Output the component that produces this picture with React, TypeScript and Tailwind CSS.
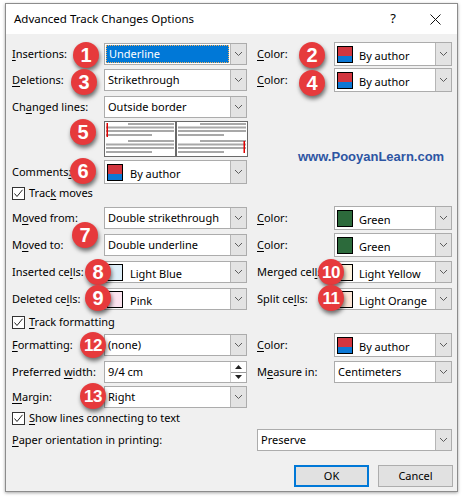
import React from "react";

const Chevron = () => (
  <svg width="9" height="6" viewBox="0 0 9 6">
    <path d="M1 1 L4.5 4.5 L8 1" fill="none" stroke="#5c5c5c" strokeWidth="1" />
  </svg>
);

function Arrow() {
  return (
    <div className="w-[16px] self-stretch shrink-0 flex items-center justify-center bg-[#e3e3e3] border-l border-[#b6b6b6]">
      <Chevron />
    </div>
  );
}

function Combo({ w = "w-[143px]", tall = false, children }: { w?: string; tall?: boolean; children?: React.ReactNode }) {
  return (
    <div className={`flex shrink-0 ${w} ${tall ? "h-[24px]" : "h-[22px]"} border border-[#acacac] bg-white`}>
      <div className="flex-1 flex items-center min-w-0">{children}</div>
      <Arrow />
    </div>
  );
}

function Txt({ children }: { children: React.ReactNode }) {
  return <span className="pl-[3px] whitespace-nowrap">{children}</span>;
}

function SwatchText({ sw, text, gap = "ml-[7px]" }: { sw: React.ReactNode; text: string; gap?: string }) {
  return (
    <div className="flex items-center pl-[2px] h-full">
      {sw}
      <span className={`${gap} pt-[5px] whitespace-nowrap`}>{text}</span>
    </div>
  );
}

const Author = () => (
  <div className="w-[16px] h-[17px] border border-black flex flex-col shrink-0">
    <div className="flex-[3] bg-[#d2363f]" />
    <div className="flex-[2] bg-[#0c78d5]" />
  </div>
);

const Plain = ({ bg }: { bg: string }) => (
  <div className={`w-[16px] h-[17px] border border-black shrink-0 ${bg}`} />
);

function Check() {
  return (
    <div className="w-[13px] h-[13px] border border-[#333333] bg-white flex items-center justify-center shrink-0">
      <svg width="11" height="11" viewBox="0 0 11 11">
        <path d="M1.5 5.5 L4 8.5 L9.5 1.8" fill="none" stroke="#222" strokeWidth="1" />
      </svg>
    </div>
  );
}

function U({ children }: { children: React.ReactNode }) {
  return <span className="underline underline-offset-[2px]">{children}</span>;
}

function Badge({ n, pos }: { n: string; pos: string }) {
  return (
    <div
      className={`absolute ${pos} w-[26px] h-[26px] rounded-full bg-[#e63a3c] shadow-[1px_3px_4px_rgba(0,0,0,0.55)] flex items-center justify-center text-white font-['Liberation_Sans',Arial,sans-serif] font-bold leading-none ${n.length > 1 ? "text-[17px] tracking-[-0.5px]" : "text-[20px]"}`}
    >
      {n}
    </div>
  );
}

function Preview({ right = false }: { right?: boolean }) {
  const g = "#a8a8a8";
  return (
    <svg width="72" height="36" viewBox="0 0 72 36" className="block">
      <rect x="0.5" y="0.5" width="71" height="35" fill="white" stroke="#6a6a6a" strokeWidth="1" />
      {[3, 20].map((y0) => (
        <g key={y0}>
          <rect x="24" y={y0 - 1} width="46" height="2" fill={g} />
          <rect x="2" y={y0 + 2.5} width="68" height="2" fill={g} />
          <rect x="2" y={y0 + 6} width="68" height="2" fill={g} />
          <rect x="2" y={y0 + 10} width="46" height="2" fill={g} />
        </g>
      ))}
      {right ? (
        <rect x="67.5" y="20" width="1.5" height="12" fill="#e00000" />
      ) : (
        <rect x="2.5" y="2" width="1.5" height="14" fill="#e00000" />
      )}
    </svg>
  );
}

export default function App() {
  return (
    <div className="relative w-[463px] h-[499px] bg-white pl-[5px] pt-[3px] font-['Noto_Sans',sans-serif] text-[11px] text-black">
      <div className="w-[453px] h-[489px] border border-[#8c8c8c] shadow-[0_1px_3px_rgba(0,0,0,0.35)] flex flex-col">
        {/* title bar */}
        <div className="h-[30px] bg-white flex items-center pl-[8px] pr-[16px] shrink-0">
          <span className="text-[11.5px] flex-1">Advanced Track Changes Options</span>
          <span className="text-[13px] mr-[34px]">?</span>
          <svg width="11" height="11" viewBox="0 0 11 11">
            <path d="M0.5 0.5 L10.5 10.5 M10.5 0.5 L0.5 10.5" stroke="#111" strokeWidth="1" />
          </svg>
        </div>
        {/* body */}
        <div className="flex-1 bg-[#f0f0f0] pl-[6px] pr-[4px] flex flex-col">
          {/* Insertions */}
          <div className="flex items-center h-[22px] mt-[9px]">
            <div className="w-[92px] shrink-0"><U>I</U>nsertions:</div>
            <Combo>
              <div className="h-full w-full p-[1px]">
                <div className="h-full w-full bg-[#0078d7] text-white border border-dotted border-[#f0b060] flex items-center pl-[2px]">Underline</div>
              </div>
            </Combo>
            <div className="w-[77px] ml-[10px] shrink-0"><U>C</U>olor:</div>
            <Combo w="w-[118px]" tall>
              <SwatchText sw={<Author />} text="By author" gap="ml-[6px]" />
            </Combo>
          </div>
          {/* Deletions */}
          <div className="flex items-center h-[22px] mt-[4px]">
            <div className="w-[92px] shrink-0"><U>D</U>eletions:</div>
            <Combo><Txt>Strikethrough</Txt></Combo>
            <div className="w-[77px] ml-[10px] shrink-0"><U>C</U>olor:</div>
            <Combo w="w-[118px]" tall>
              <SwatchText sw={<Author />} text="By author" gap="ml-[6px]" />
            </Combo>
          </div>
          {/* Changed lines */}
          <div className="flex items-center h-[22px] mt-[5px]">
            <div className="w-[92px] shrink-0">Ch<U>a</U>nged lines:</div>
            <Combo><Txt>Outside border</Txt></Combo>
          </div>
          {/* Preview */}
          <div className="flex h-[36px] mt-[3px] pl-[92px]">
            <Preview />
            <Preview right />
          </div>
          {/* Comments */}
          <div className="flex items-center h-[24px] mt-[3px]">
            <div className="w-[92px] shrink-0">Comments<U>:</U></div>
            <Combo tall>
              <SwatchText sw={<Author />} text="By author" />
            </Combo>
          </div>
          {/* Track moves */}
          <div className="flex items-center h-[13px] mt-[3px] gap-[4px]">
            <Check />
            <span>Trac<U>k</U> moves</span>
          </div>
          {/* Moved from */}
          <div className="flex items-center h-[22px] mt-[7px]">
            <div className="w-[92px] shrink-0">M<U>o</U>ved from:</div>
            <Combo><Txt>Double strikethrough</Txt></Combo>
            <div className="w-[77px] ml-[10px] shrink-0"><U>C</U>olor:</div>
            <Combo w="w-[118px]" tall>
              <SwatchText sw={<Plain bg="bg-[#2c6a3b]" />} text="Green" gap="ml-[6px]" />
            </Combo>
          </div>
          {/* Moved to */}
          <div className="flex items-center h-[22px] mt-[5px]">
            <div className="w-[92px] shrink-0">M<U>o</U>ved to:</div>
            <Combo><Txt>Double underline</Txt></Combo>
            <div className="w-[77px] ml-[10px] shrink-0"><U>C</U>olor:</div>
            <Combo w="w-[118px]" tall>
              <SwatchText sw={<Plain bg="bg-[#2c6a3b]" />} text="Green" gap="ml-[6px]" />
            </Combo>
          </div>
          {/* Inserted cells */}
          <div className="flex items-center h-[22px] mt-[5px]">
            <div className="w-[92px] shrink-0">Inserted ce<U>l</U>ls:</div>
            <Combo>
              <SwatchText sw={<Plain bg="bg-[#ddeef8]" />} text="Light Blue" />
            </Combo>
            <div className="w-[77px] ml-[10px] shrink-0">Merged cel<U>l</U>s:</div>
            <Combo w="w-[118px]">
              <SwatchText sw={<Plain bg="bg-[#fdf3df]" />} text="Light Yellow" gap="ml-[6px]" />
            </Combo>
          </div>
          {/* Deleted cells */}
          <div className="flex items-center h-[22px] mt-[5px]">
            <div className="w-[92px] shrink-0">Deleted ce<U>l</U>ls:</div>
            <Combo>
              <SwatchText sw={<Plain bg="bg-[#fbe3ef]" />} text="Pink" />
            </Combo>
            <div className="w-[77px] ml-[10px] shrink-0">Split ce<U>l</U>ls:</div>
            <Combo w="w-[118px]">
              <SwatchText sw={<Plain bg="bg-[#fbe5d7]" />} text="Light Orange" gap="ml-[6px]" />
            </Combo>
          </div>
          {/* Track formatting */}
          <div className="flex items-center h-[13px] mt-[6px] gap-[4px]">
            <Check />
            <span><U>T</U>rack formatting</span>
          </div>
          {/* Formatting */}
          <div className="flex items-center h-[22px] mt-[5px]">
            <div className="w-[92px] shrink-0"><U>F</U>ormatting:</div>
            <Combo><Txt>(none)</Txt></Combo>
            <div className="w-[77px] ml-[10px] shrink-0"><U>C</U>olor:</div>
            <Combo w="w-[118px]" tall>
              <SwatchText sw={<Author />} text="By author" gap="ml-[6px]" />
            </Combo>
          </div>
          {/* Preferred width */}
          <div className="flex items-center h-[22px] mt-[5px]">
            <div className="w-[92px] shrink-0">Preferred <U>w</U>idth:</div>
            <div className="flex w-[143px] h-[22px] shrink-0 border border-[#acacac] bg-white">
              <div className="flex-1 flex items-center"><Txt>9/4 cm</Txt></div>
              <div className="w-[16px] flex flex-col border-l border-[#d0d0d0]">
                <div className="flex-1 flex items-center justify-center border-b border-[#9a9a9a]">
                  <svg width="7" height="4" viewBox="0 0 7 4"><path d="M0 4 L3.5 0 L7 4 Z" fill="#222" /></svg>
                </div>
                <div className="flex-1 flex items-center justify-center">
                  <svg width="7" height="4" viewBox="0 0 7 4"><path d="M0 0 L3.5 4 L7 0 Z" fill="#222" /></svg>
                </div>
              </div>
            </div>
            <div className="w-[77px] ml-[10px] shrink-0">M<U>e</U>asure in:</div>
            <Combo w="w-[118px]"><Txt>Centimeters</Txt></Combo>
          </div>
          {/* Margin */}
          <div className="flex items-center h-[22px] mt-[3px]">
            <div className="w-[92px] shrink-0"><U>M</U>argin:</div>
            <Combo><Txt>Right</Txt></Combo>
          </div>
          {/* Show lines */}
          <div className="flex items-center h-[13px] mt-[4px] gap-[4px]">
            <Check />
            <span><U>S</U>how lines connecting to text</span>
          </div>
          {/* Paper orientation */}
          <div className="flex items-center h-[22px] mt-[4px]">
            <div className="w-[245px] shrink-0"><U>P</U>aper orientation in printing:</div>
            <Combo w="w-[195px]"><Txt>Preserve</Txt></Combo>
          </div>
          {/* Buttons */}
          <div className="flex justify-end gap-[9px] mt-[14px]">
            <button className="w-[75px] h-[22px] bg-[#e1e1e1] border-2 border-[#0078d7] flex items-center justify-center">OK</button>
            <button className="w-[75px] h-[22px] bg-[#e1e1e1] border border-[#adadad] flex items-center justify-center">Cancel</button>
          </div>
        </div>
      </div>

      <div className="absolute left-[298px] top-[147px] font-['Liberation_Sans',Arial,sans-serif] font-bold text-[13px] text-[#2d55a3]">www.PooyanLearn.com</div>

      <Badge n="1" pos="left-[73px] top-[42px]" />
      <Badge n="2" pos="left-[299px] top-[42px]" />
      <Badge n="3" pos="left-[71px] top-[69px]" />
      <Badge n="4" pos="left-[299px] top-[70px]" />
      <Badge n="5" pos="left-[70px] top-[119px]" />
      <Badge n="6" pos="left-[70px] top-[158px]" />
      <Badge n="7" pos="left-[72px] top-[222px]" />
      <Badge n="8" pos="left-[85px] top-[259px]" />
      <Badge n="9" pos="left-[85px] top-[285px]" />
      <Badge n="10" pos="left-[318px] top-[259px]" />
      <Badge n="11" pos="left-[318px] top-[285px]" />
      <Badge n="12" pos="left-[80px] top-[332px]" />
      <Badge n="13" pos="left-[80px] top-[383px]" />
    </div>
  );
}
